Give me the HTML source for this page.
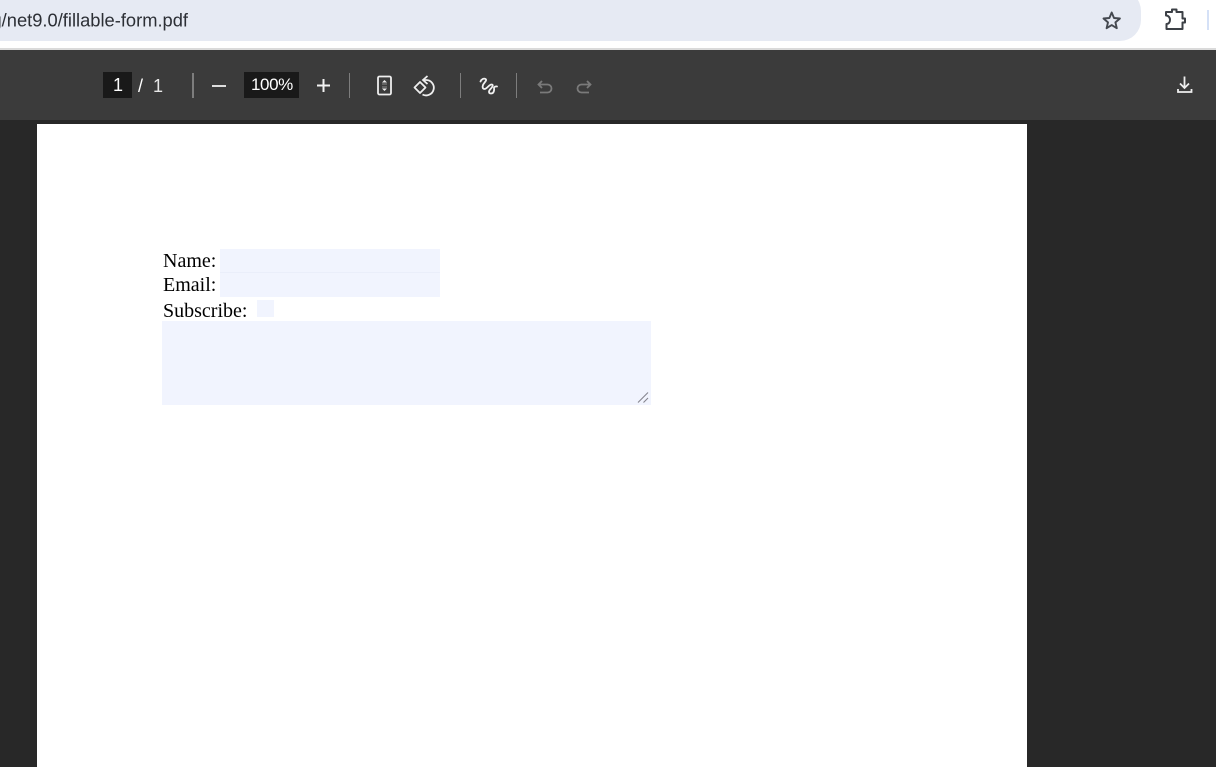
<!DOCTYPE html>
<html>
<head>
<meta charset="utf-8">
<style>
html,body{margin:0;padding:0;width:1216px;height:767px;overflow:hidden;background:#282828;font-family:"Liberation Sans",sans-serif}
div,span,svg{position:absolute}
.t{white-space:nowrap;color:#fff;font-size:17px;line-height:20px}
.sep{width:1px;height:25px;top:73px;background:#7d7d7d}
.form{font-family:"Liberation Serif",serif;font-size:20px;line-height:24px;color:#000;white-space:nowrap}
.f{background:#f1f4fe}
</style>
</head>
<body>
<div style="left:0;top:0;width:1216px;height:48px;background:#fff"></div>
<div style="left:-40px;top:-10px;width:1181px;height:51px;background:#e6eaf3;border-radius:0 21px 21px 0"></div>
<svg style="left:0;top:0;width:1216px;height:48px" viewBox="0 0 1216 48">
<text x="-8.500" y="26.500" font-family="Liberation Sans" font-size="18.500" fill="#2c2f35" textLength="196.500" lengthAdjust="spacingAndGlyphs">g/net9.0/fillable-form.pdf</text>
<path d="M1111.700 12.500l2.300 5.500 5.900.500-4.500 3.900 1.400 5.800-5.100-3.100-5.100 3.100 1.400-5.800-4.500-3.900 5.900-.500z" fill="none" stroke="#454950" stroke-width="1.900" stroke-linejoin="round"/>
<path d="M1166 12h6v-2.500h4.500V12h6v6.500h2.500v4h-2.500V29h-16v-5c2.500 0 3.500-2 3.500-4.200S1168.500 15.500 1166 15.500z" fill="none" stroke="#3c4046" stroke-width="2" stroke-linejoin="round"/>
<rect x="1207" y="10" width="2" height="20" fill="#d5e1f7"/>
</svg>
<div style="left:0;top:48px;width:1216px;height:2px;background:#dadada"></div>
<div style="left:0;top:50px;width:1216px;height:70px;background:#3b3b3b"></div>

<div style="left:103px;top:72px;width:29px;height:26px;background:#191919"></div>
<div class="t" style="left:113px;top:75px;font-size:18px">1</div>
<div class="t" style="left:138px;top:76px;font-size:18px">/</div>
<div class="t" style="left:153px;top:76px;font-size:18px;color:#e8e8e8">1</div>
<div style="left:192px;top:73px;width:2px;height:25px;background:#7d7d7d"></div>
<div style="left:212px;top:85px;width:14px;height:2px;background:#ddd"></div>
<div style="left:244px;top:72px;width:55px;height:26px;background:#191919"></div>
<div class="t" style="left:251px;top:75px;letter-spacing:-.4px;font-size:17px">100%</div>
<div class="sep" style="left:349px"></div>
<div class="sep" style="left:460px"></div>
<div class="sep" style="left:516px"></div>

<svg style="left:0;top:50px;width:1216px;height:70px" viewBox="0 50 1216 70" fill="none">
<path d="M323.500 79v13M317 85.500h13" stroke="#f2f2f2" stroke-width="2"/>
<rect x="378" y="76.500" width="13" height="18" rx="1.500" stroke="#eee" stroke-width="1.800"/>
<path d="M382 82.500l2.500-2.500 2.500 2.500z" fill="#eee"/>
<path d="M382 88.500l2.500 2.500 2.500-2.500z" fill="#eee"/>
<path d="M382 84h5M382 87h5" stroke="#aaa" stroke-width=".8"/>
<path d="M414.500 87.500l5.500-5.500 5.500 5.500-5.500 5.500z" stroke="#eee" stroke-width="1.800" stroke-linejoin="round"/>
<path d="M423 80h3a7.700 7.700 0 1 1-3.500 14.500" stroke="#eee" stroke-width="1.800"/>
<path d="M427.500 76l-4.500 4 4.500 4" stroke="#eee" stroke-width="1.800"/>
<path d="M480.500 81.500c1-2.500 3.500-3.500 5-2.500 2 1.300-1.500 3.500-2.500 6-.9 2.300-.3 4 1.500 4 2.500 0 4.500-4.500 7-4.500 2 0 1.500 2-1 4.500-2.300 2.300-1.800 4.500.5 4.500 2.800 0 3.500-3 3-6 .8-1 2-1.300 3-1" stroke="#f0f0f0" stroke-width="1.800" stroke-linecap="round" stroke-linejoin="round"/>
<path d="M542 81l-3.500 3.500 3.500 3.500M539 84.500h8.500a3.500 3.500 0 0 1 0 8H540" stroke="#7a7a7a" stroke-width="1.800"/>
<path d="M587 81l3.500 3.500-3.500 3.500M590 84.500h-8.500a3.500 3.500 0 0 0 0 8H589" stroke="#7a7a7a" stroke-width="1.800"/>
<path d="M1184.500 76.500v11M1180 83.500l4.500 4.500 4.500-4.500" stroke="#eee" stroke-width="1.800"/>
<path d="M1178 89v3h13.500v-3" stroke="#eee" stroke-width="1.800"/>
</svg>

<div style="left:37px;top:124px;width:990px;height:643px;background:#fff"></div>
<div class="form" style="left:163px;top:249px">Name:</div>
<div class="form" style="left:163px;top:273px">Email:</div>
<div class="form" style="left:163px;top:299px">Subscribe:</div>
<div class="f" style="left:220px;top:249px;width:220px;height:23px"></div>
<div style="left:220px;top:272px;width:220px;height:1px;background:#eaeefa"></div>
<div class="f" style="left:220px;top:273px;width:220px;height:24px"></div>
<div class="f" style="left:257px;top:300px;width:17px;height:17px"></div>
<div class="f" style="left:162px;top:321px;width:489px;height:84px"></div>
<svg style="left:636px;top:391px;width:14px;height:12px" viewBox="0 0 14 12" fill="none">
<path d="M2 11.500L12 1.500M7.500 11.500L12 7" stroke="#85858f" stroke-width="1.100"/>
</svg>
</body>
</html>
